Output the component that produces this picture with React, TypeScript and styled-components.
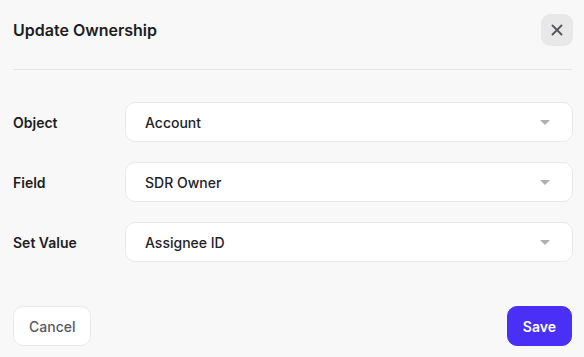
import React from 'react';
import styled, { createGlobalStyle } from 'styled-components';

const GlobalStyle = createGlobalStyle`
  html, body {
    margin: 0;
    padding: 0;
    background: #f8f8f8;
    font-family: Inter, "Liberation Sans", sans-serif;
  }
`;

const Dialog = styled.div`
  width: 584px;
  height: 357px;
  box-sizing: border-box;
  padding: 14px 12px 0 13px;
  display: flex;
  flex-direction: column;
`;

const Header = styled.div`
  display: flex;
  align-items: center;
  justify-content: space-between;
  padding-bottom: 23px;
  border-bottom: 1px solid #e4e4e6;
`;

const Title = styled.h2`
  margin: 0;
  font-size: 16px;
  font-weight: 600;
  color: #1d1d22;
`;

const CloseButton = styled.button`
  width: 32px;
  height: 32px;
  border: none;
  border-radius: 9px;
  background: #e8e8e9;
  display: flex;
  align-items: center;
  justify-content: center;
  padding: 0;
  margin-right: -1px;
  cursor: pointer;
`;

const Form = styled.div`
  display: flex;
  flex-direction: column;
  gap: 20px;
  margin-top: 32px;
`;

const Row = styled.div`
  display: grid;
  grid-template-columns: 112px 1fr;
  align-items: center;
`;

const Label = styled.label`
  font-size: 14px;
  font-weight: 600;
  color: #1d1d22;
`;

const Select = styled.div`
  height: 40px;
  box-sizing: border-box;
  border: 1px solid #e9e9eb;
  border-radius: 10px;
  background: #ffffff;
  display: flex;
  align-items: center;
  justify-content: space-between;
  padding: 0 22px 0 19px;
  font-size: 14px;
  font-weight: 500;
  color: #222227;
  margin-right: -1px;
`;

const Caret = styled.span`
  width: 0;
  height: 0;
  border-left: 5px solid transparent;
  border-right: 5px solid transparent;
  border-top: 5px solid #b0b0b3;
`;

const Footer = styled.div`
  display: flex;
  justify-content: space-between;
  align-items: center;
  margin-top: 44px;
`;

const Button = styled.button<{ $primary?: boolean }>`
  height: 40px;
  box-sizing: border-box;
  border-radius: 10px;
  font-family: inherit;
  font-size: 14px;
  font-weight: ${(p) => (p.$primary ? 600 : 500)};
  padding: 0 ${(p) => (p.$primary ? '15px' : '15px')};
  border: 1px solid ${(p) => (p.$primary ? '#4a2ff6' : '#e9e9eb')};
  background: ${(p) => (p.$primary ? '#4a2ff6' : '#ffffff')};
  color: ${(p) => (p.$primary ? '#ffffff' : '#5a5a60')};
  cursor: pointer;
`;

const fields = [
  { label: 'Object', value: 'Account' },
  { label: 'Field', value: 'SDR Owner' },
  { label: 'Set Value', value: 'Assignee ID' },
];

export default function App() {
  return (
    <>
      <GlobalStyle />
      <Dialog>
        <Header>
          <Title>Update Ownership</Title>
          <CloseButton aria-label="Close">
            <svg width="12" height="12" viewBox="0 0 12 12">
              <path
                d="M1.5 1.5L10.5 10.5M10.5 1.5L1.5 10.5"
                stroke="#55555b"
                strokeWidth="1.8"
                strokeLinecap="round"
              />
            </svg>
          </CloseButton>
        </Header>
        <Form>
          {fields.map((f) => (
            <Row key={f.label}>
              <Label>{f.label}</Label>
              <Select>
                {f.value}
                <Caret />
              </Select>
            </Row>
          ))}
        </Form>
        <Footer>
          <Button>Cancel</Button>
          <Button $primary>Save</Button>
        </Footer>
      </Dialog>
    </>
  );
}
